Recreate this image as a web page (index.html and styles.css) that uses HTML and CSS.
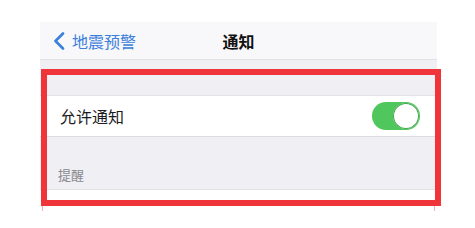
FILE: index.html
```html
<!DOCTYPE html>
<html lang="zh">
<head>
<meta charset="utf-8">
<link rel="stylesheet" href="styles.css">
</head>
<body>
<div class="stage">
  <div class="phone">
    <header class="nav">
      <div class="back">
        <svg class="chev" width="12" height="18" viewBox="0 0 12 18"><polyline points="10,1.5 2.5,9 10,16.5" fill="none" stroke="#3b7fdc" stroke-width="2.6" stroke-linecap="round" stroke-linejoin="round"/></svg>
        <span class="back-text">地震预警</span>
      </div>
      <div class="title">通知</div>
      <div class="spacer"></div>
    </header>
    <div class="gap-top"></div>
    <div class="row">
      <span class="row-label">允许通知</span>
      <span class="toggle"><span class="knob"></span></span>
    </div>
    <div class="section-head"><span>提醒</span></div>
    <div class="row-blank"></div>
  </div>
  <div class="annot"></div>
</div>
</body>
</html>
```

FILE: styles.css
```css
html, body {
  margin: 0;
  padding: 0;
  background: #ffffff;
}
body {
  font-family: "Noto Sans CJK SC", "Noto Sans", sans-serif;
  width: 475px;
  height: 228px;
  overflow: hidden;
}
.stage {
  position: relative;
  width: 475px;
  height: 228px;
}
.phone {
  margin-left: 40px;
  padding-top: 22px;
  width: 397px;
}
.nav {
  height: 37px;
  background: #f8f8fa;
  border-bottom: 1px solid #e2e2e6;
  display: grid;
  grid-template-columns: 1fr auto 1fr;
  align-items: center;
}
.back {
  display: flex;
  align-items: center;
  padding-left: 13px;
  gap: 7px;
  color: #3b7fdc;
  font-size: 16px;
  line-height: 18px;
}
.chev {
  display: block;
}
.title {
  font-size: 16px;
  font-weight: 700;
  color: #111111;
  line-height: 18px;
}
.gap-top {
  height: 35px;
  background: #efeff4;
}
.row {
  height: 40px;
  background: #ffffff;
  border-top: 1px solid #e4e4e8;
  border-bottom: 1px solid #dcdce0;
  display: flex;
  align-items: center;
  justify-content: space-between;
  padding: 0 17px 0 20px;
}
.row-label {
  font-size: 16px;
  color: #1c1c1e;
  line-height: 18px;
}
.toggle {
  width: 48px;
  height: 28px;
  border-radius: 14px;
  background: #4fc75c;
  display: flex;
  justify-content: flex-end;
  align-items: center;
  padding: 1px;
  box-sizing: border-box;
}
.knob {
  width: 26px;
  height: 26px;
  border-radius: 50%;
  background: #ffffff;
  box-shadow: inset 0 0 0 1px #3fa84c;
}
.section-head {
  height: 53px;
  background: #efeff4;
  border-bottom: 1px solid #e2e2e6;
  display: flex;
  align-items: flex-end;
  padding: 0 0 7px 18px;
  box-sizing: border-box;
  font-size: 13px;
  color: #8a8a8f;
  line-height: 14px;
}
.row-blank {
  height: 40px;
  background: #ffffff;
}
.annot {
  position: absolute;
  left: 41px;
  top: 69px;
  width: 400px;
  height: 137px;
  border: 6px solid #ef3539;
  box-sizing: border-box;
}
.annot::before,
.annot::after {
  content: "";
  position: absolute;
  top: 131px;
  width: 1px;
  height: 5px;
  background: #f3b0b2;
}
.annot::before {
  left: -5px;
}
.annot::after {
  right: 0;
}
```
